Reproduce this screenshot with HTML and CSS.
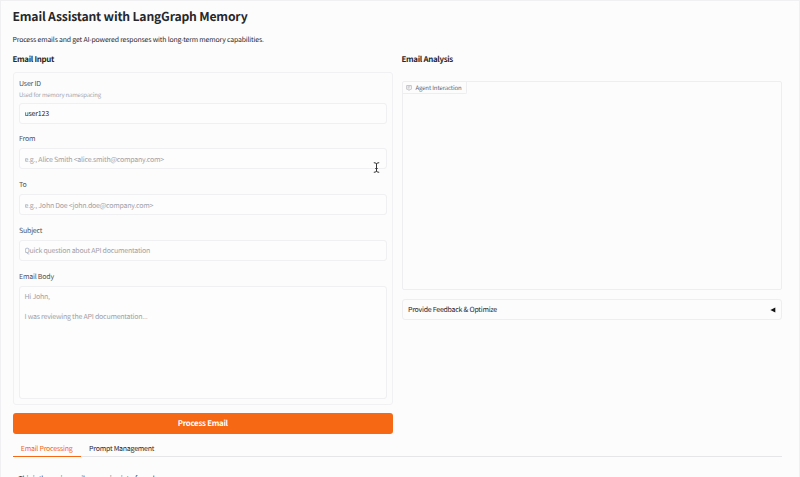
FILE: index.html
```html
<!DOCTYPE html>
<html lang="en">
<head>
<meta charset="utf-8">
<title>Email Assistant with LangGraph Memory</title>
<link rel="stylesheet" href="styles.css">
</head>
<body>
<main class="app">
  <h1>Email Assistant with LangGraph Memory</h1>
  <p class="intro">Process emails and get AI-powered responses with long-term memory capabilities.</p>
  <div class="columns">
    <section class="column">
      <h2>Email Input</h2>
      <form class="panel">
        <label class="field"><span class="label">User ID</span><span class="hint">Used for memory namespacing</span><input type="text" value="user123"></label>
        <label class="field"><span class="label">From</span><input type="text" placeholder="e.g., Alice Smith &lt;alice.smith@company.com&gt;"></label>
        <label class="field"><span class="label">To</span><input type="text" placeholder="e.g., John Doe &lt;john.doe@company.com&gt;"></label>
        <label class="field"><span class="label">Subject</span><input type="text" placeholder="Quick question about API documentation"></label>
        <label class="field"><span class="label">Email Body</span><textarea placeholder="Hi John,&#10;&#10;I was reviewing the API documentation..."></textarea></label>
      </form>
      <button class="primary" type="button">Process Email</button>
    </section>
    <section class="column">
      <h2>Email Analysis</h2>
      <div class="chat">
        <div class="chat-label">
          <svg viewBox="0 0 6 6" width="6" height="6" fill="none" stroke="#a3a3aa" stroke-width=".6"><path d="M1 .5h4q.6 0 .6.6v2.6q0 .6-.6.6H3.800L3 5.500l-.8-1.200H1q-.6 0-.6-.6V1.100Q.4.5 1 .5zM1.500 1.800h3M1.500 3h2"/></svg>
          <span>Agent Interaction</span>
        </div>
      </div>
      <div class="accordion"><span>Provide Feedback &amp; Optimize</span><svg viewBox="0 0 6 6" width="6" height="6"><path d="M.4 3 5.300.500v5z" fill="#111"/></svg></div>
    </section>
  </div>
  <nav class="tabs"><a class="tab active">Email Processing</a><a class="tab">Prompt Management</a></nav>
  <p class="tab-content">This is the main email processing interface above.</p>
</main>
<svg class="cursor" viewBox="0 0 7 11" width="7" height="11" fill="none" stroke="#333" stroke-width="1"><path d="M.8.7Q3.500.7 3.500 2v7Q3.500 10.300.8 10.300M6.200.7Q3.500.7 3.500 2M3.500 9q0 1.300 2.700 1.300M2.300 6.500h2.400"/></svg>
</body>
</html>
```
FILE: styles.css
```css
* { box-sizing: border-box; }
html, body { height: 100%; }
body {
  margin: 0;
  overflow: hidden;
  background: #fcfcfd;
  border: 1px solid #f0f0f2;
  border-bottom: 0;
  color: #27272a;
  font: 6.4px/10px "Noto Sans CJK JP", "Open Sans", sans-serif;
  text-rendering: geometricPrecision;
}
.app { width: 782px; padding: 6px 0 0 11.5px; }
h1 { margin: 0; font-size: 12.2px; line-height: 18px; font-weight: 700; letter-spacing: -.19px; }
.intro { margin: 9px 0 0; font-size: 6.9px; line-height: 10px; letter-spacing: -.16px; }
.columns { display: grid; grid-template-columns: 380.5px 380.5px; gap: 8.5px; margin-top: 9px; }
.column { display: flex; flex-direction: column; }
h2 { margin: 0; font-size: 7.9px; line-height: 13px; font-weight: 700; letter-spacing: -.31px; }
.panel {
  display: flex;
  flex-direction: column;
  gap: 9.8px;
  height: 333px;
  margin: 6px 0 8px;
  padding: 5px 5.5px;
  border: 1px solid #f1f1f4;
  border-radius: 3px;
}
.field { display: flex; flex-direction: column; }
.label { font-size: 7px; line-height: 12px; margin-bottom: 3px; color: #52525b; letter-spacing: -.2px; }
.hint { font-size: 6px; line-height: 8px; margin: -2.5px 0 4px; color: #a6a6ad; letter-spacing: -.2px; }
input, textarea {
  display: block;
  width: 100%;
  height: 21px;
  padding: 6px 4.5px 4px;
  border: 1px solid #f0f0f2;
  border-radius: 3px;
  background: #fdfdfe;
  color: #27272a;
  font: 7px/10px "Noto Sans CJK JP", "Open Sans", sans-serif;
  letter-spacing: -.23px;
  text-rendering: inherit;
  outline: 0;
  resize: none;
}
input[value] { letter-spacing: -.2px; }
textarea { height: 113px; padding-top: 5px; line-height: 10.2px; }
::placeholder { color: #a1a1a6; opacity: 1; }
.primary {
  height: 21px;
  padding: 0;
  border: 0;
  border-radius: 3px;
  background: #f66814;
  color: #fff;
  font: 700 7.900px/21px "Noto Sans CJK JP", "Open Sans", sans-serif;
  letter-spacing: -.29px;
  text-rendering: inherit;
}
.chat { height: 209px; margin: 15px 0 9px; border: 1px solid #eeeef1; border-radius: 2px; }
.chat-label {
  display: flex;
  align-items: center;
  gap: 3.8px;
  width: 64px;
  height: 12px;
  padding-left: 3.2px;
  border: solid #eeeef1;
  border-width: 0 1px 1px 0;
  border-radius: 0 0 2px;
  color: #65656d;
  font-size: 6px;
  letter-spacing: -.13px;
  white-space: nowrap;
}
.accordion {
  display: flex;
  justify-content: space-between;
  align-items: center;
  height: 21px;
  padding: 0 5.5px;
  border: 1px solid #eeeef1;
  border-radius: 3px;
  font-size: 7px;
  letter-spacing: -.24px;
}
.tabs { display: flex; width: 769.5px; height: 23px; border-bottom: 1px solid #e6e6e9; }
.tab { height: 23px; padding: 0 8.300px; font-size: 7px; line-height: 30px; letter-spacing: -.23px; }
.active { color: #f66814; border-bottom: 1px solid #f66814; }
.tab-content { margin: 17px 6px; font-size: 7px; letter-spacing: -.2px; }
.cursor { position: absolute; left: 373px; top: 162px; }
```
